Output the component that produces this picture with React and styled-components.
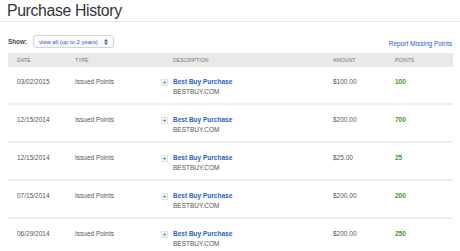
import React from "react";
import styled, { createGlobalStyle } from "styled-components";

const rows = [
    { date: "03/02/2015", amount: "$100.00", points: "100" },
    { date: "12/15/2014", amount: "$200.00", points: "700" },
    { date: "12/15/2014", amount: "$25.00", points: "25" },
    { date: "07/15/2014", amount: "$200.00", points: "200" },
    { date: "06/29/2014", amount: "$200.00", points: "250" },
];

function App() {
    return (
        <Page>
            <GlobalStyle />
            <Title>Purchase History</Title>
            <Content>
                <Toolbar>
                    <ShowBox>
                        <ShowLabel>Show:</ShowLabel>
                        <Select>
                            <span>view all (up to 2 years)</span>
                            <svg width="4" height="6" viewBox="0 0 4 6">
                                <path d="M0 2.4 L2 0 L4 2.4 Z" fill="#2a5fbf" />
                                <path d="M0 3.6 L2 6 L4 3.6 Z" fill="#2a5fbf" />
                            </svg>
                        </Select>
                    </ShowBox>
                    <ReportLink>Report Missing Points</ReportLink>
                </Toolbar>
                <HeaderRow>
                    <HeadCell>Date</HeadCell>
                    <HeadCell>Type</HeadCell>
                    <HeadCell indent>Description</HeadCell>
                    <HeadCell>Amount</HeadCell>
                    <HeadCell>Points</HeadCell>
                </HeaderRow>
                {rows.map((row, index) => (
                    <Row key={index} last={index === rows.length - 1}>
                        <Cell>{row.date}</Cell>
                        <Cell>Issued Points</Cell>
                        <DescCell>
                            <PlusBox>+</PlusBox>
                            <DescText>
                                <DescLink>Best Buy Purchase</DescLink>
                                <span>BESTBUY.COM</span>
                            </DescText>
                        </DescCell>
                        <Cell>{row.amount}</Cell>
                        <PointsCell>{row.points}</PointsCell>
                    </Row>
                ))}
            </Content>
        </Page>
    );
}

const GlobalStyle = createGlobalStyle`
    body {
        margin: 0;
        background: #ffffff;
        font-family: "Liberation Sans", Arial, sans-serif;
    }
`;

const Page = styled.div`
    width: 460px;
    height: 251px;
    overflow: hidden;
    background: #ffffff;
`;

const Title = styled.h1`
    margin: 0;
    padding: 1px 0 0 7px;
    font-size: 15.8px;
    font-weight: 400;
    line-height: 20px;
    letter-spacing: -0.35px;
    color: #333333;
    border-bottom: 1px solid #e6e6e6;
`;

const Content = styled.div`
    width: 445px;
    margin: 0 0 0 8px;
`;

const Toolbar = styled.div`
    display: flex;
    justify-content: space-between;
    align-items: center;
    margin-top: 13px;
    height: 13px;
`;

const ShowBox = styled.div`
    display: flex;
    align-items: center;
    gap: 6px;
`;

const ShowLabel = styled.span`
    font-size: 6.3px;
    font-weight: 700;
    color: #444444;
`;

const Select = styled.div`
    box-sizing: border-box;
    width: 81px;
    height: 13px;
    padding: 0 5px 0 5px;
    display: flex;
    align-items: center;
    justify-content: space-between;
    border: 1px solid #d4d4d4;
    border-radius: 3px;
    background: linear-gradient(#ffffff, #f7f7f7);
    font-size: 5.9px;
    color: #2a5fbf;
`;

const ReportLink = styled.a`
    font-size: 6.5px;
    color: #2a62c4;
    margin-top: 3px;
    margin-right: 1px;
`;

const HeaderRow = styled.div`
    display: grid;
    grid-template-columns: 58px 86px 172px 62px 67px;
    margin-top: 5px;
    height: 14px;
    background: #e9e9e9;
`;

const HeadCell = styled.div`
    padding-left: ${(p) => (p.indent ? "21px" : "9px")};
    font-size: 5.2px;
    line-height: 14px;
    text-transform: uppercase;
    color: #777777;
`;

const Row = styled.div`
    display: grid;
    grid-template-columns: 58px 86px 172px 62px 67px;
    padding: 10px 0 6px 0;
    border-bottom: 2px solid ${(p) => (p.last ? "transparent" : "#eeeeee")};
    font-size: 6.5px;
    line-height: 10px;
    color: #555555;
`;

const Cell = styled.div`
    padding-left: 9px;
`;

const PointsCell = styled.div`
    padding-left: 9px;
    font-weight: 700;
    color: #3f9620;
`;

const DescCell = styled.div`
    padding-left: 9px;
    display: flex;
    align-items: flex-start;
    gap: 5px;
`;

const PlusBox = styled.div`
    box-sizing: border-box;
    width: 7px;
    height: 7px;
    margin-top: 2px;
    border: 1px solid #e2e2e2;
    background: #f6f6f6;
    color: #2a5fbf;
    font-size: 6px;
    font-weight: 700;
    line-height: 5px;
    text-align: center;
`;

const DescText = styled.div`
    display: flex;
    flex-direction: column;
`;

const DescLink = styled.a`
    font-weight: 700;
    color: #2a62c4;
`;

export default App;
